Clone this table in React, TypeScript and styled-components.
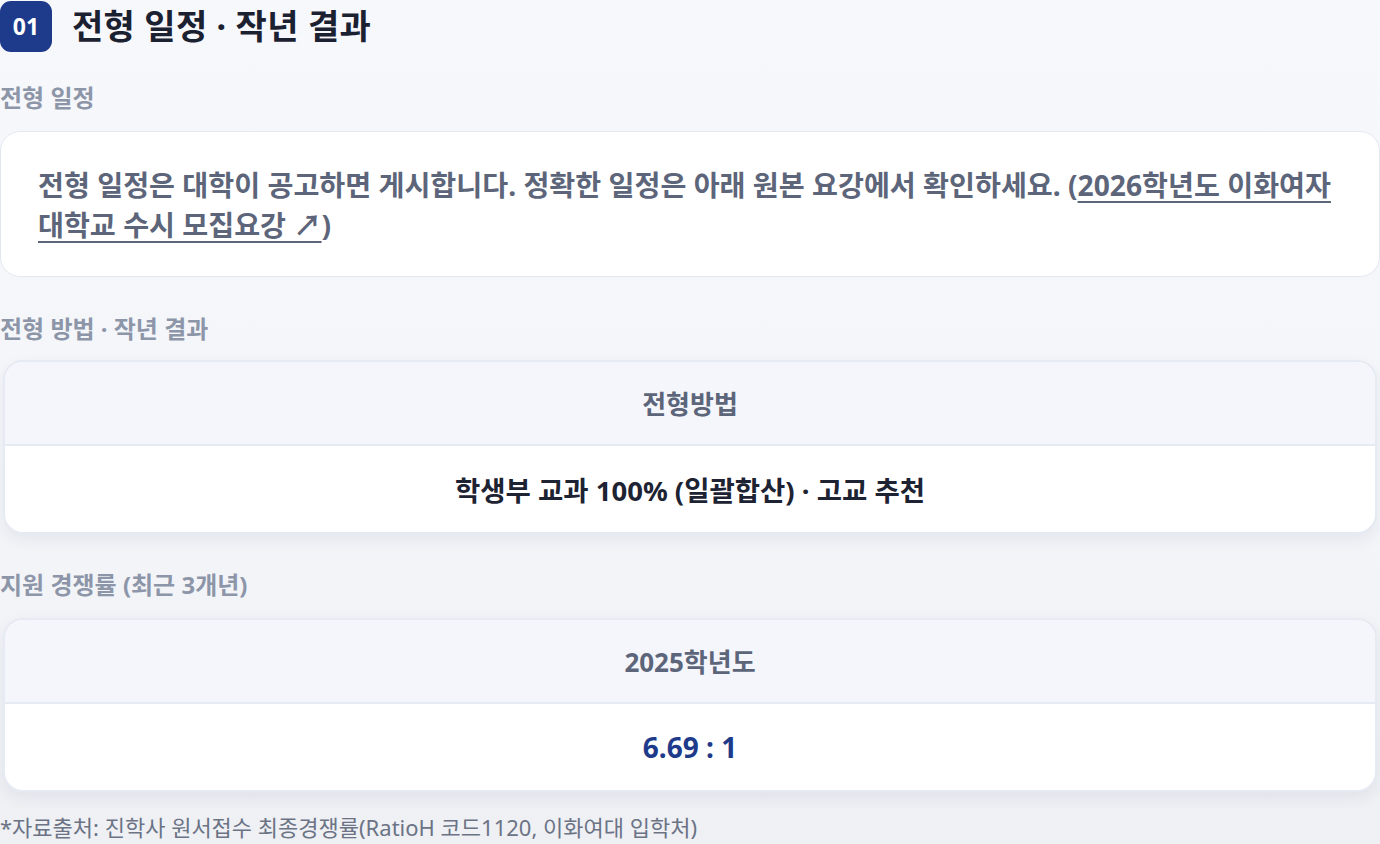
import React from "react";
import styled, { createGlobalStyle } from "styled-components";

const GlobalStyle = createGlobalStyle`
  html, body {
    margin: 0;
    padding: 0;
    background: linear-gradient(180deg, #f7f8fc 0%, #f3f5f9 60%, #eef0f4 100%);
    min-height: 100%;
  }
  body {
    font-family: "Noto Sans", "Noto Sans CJK KR", sans-serif;
    -webkit-font-smoothing: antialiased;
  }
  * { box-sizing: border-box; }
`;

const Page = styled.div`
  width: 1380px;
  height: 844px;
  display: flex;
  flex-direction: column;
  overflow: hidden;
`;

const HeaderRow = styled.div`
  display: flex;
  align-items: center;
  gap: 20px;
  height: 52px;
`;

const Badge = styled.div`
  width: 52px;
  height: 51px;
  border-radius: 11px;
  background: #1e3a8a;
  color: #ffffff;
  font-size: 23px;
  font-weight: 700;
  display: flex;
  align-items: center;
  justify-content: center;
`;

const Title = styled.h1`
  margin: 0;
  font-size: 34px;
  font-weight: 700;
  color: #1b2130;
  line-height: 1;
  letter-spacing: 0.3px;
`;

const SectionLabel = styled.div<{ $top: number; $bottom: number }>`
  margin-top: ${(p) => p.$top}px;
  margin-bottom: ${(p) => p.$bottom}px;
  font-size: 24px;
  line-height: 30px;
  font-weight: 700;
  color: #8d96a8;
`;

const NoticeCard = styled.div`
  background: #ffffff;
  border: 1.5px solid #e3e8f0;
  border-radius: 20px;
  padding: 33px 36px 31px 37px;
  font-size: 28.2px;
  line-height: 40px;
  font-weight: 700;
  color: #5c6579;
`;

const SourceLink = styled.a`
  color: #5c6579;
  text-decoration: underline;
  text-underline-offset: 5px;
  text-decoration-thickness: 2px;
`;

const TableCard = styled.div`
  margin: 0 3px;
  background: #ffffff;
  border: 2px solid #e6eaf2;
  border-radius: 20px;
  overflow: hidden;
  box-shadow: 0 6px 16px rgba(30, 41, 80, 0.07);
  display: flex;
  flex-direction: column;
`;

const TableHead = styled.div`
  height: 84px;
  background: #f4f6fb;
  border-bottom: 2px solid #e6eaf2;
  display: flex;
  align-items: center;
  justify-content: center;
  font-size: 26px;
  font-weight: 700;
  color: #5c6579;
`;

const TableBody = styled.div<{ $accent?: boolean }>`
  height: 86px;
  display: flex;
  align-items: center;
  justify-content: center;
  font-size: ${(p) => (p.$accent ? 28 : 27.5)}px;
  font-weight: 700;
  color: ${(p) => (p.$accent ? "#1e3a8a" : "#1d2332")};
`;

const Footnote = styled.div`
  margin-top: 20px;
  font-size: 22px;
  line-height: 30px;
  font-weight: 400;
  color: #6b7385;
`;

export default function App() {
  return (
    <>
      <GlobalStyle />
      <Page>
        <HeaderRow>
          <Badge>01</Badge>
          <Title>전형 일정 · 작년 결과</Title>
        </HeaderRow>

        <SectionLabel $top={31} $bottom={18}>전형 일정</SectionLabel>
        <NoticeCard>
          전형 일정은 대학이 공고하면 게시합니다. 정확한 일정은 아래 원본 요강에서 확인하세요. (<SourceLink href="#">2026학년도 이화여자대학교 수시 모집요강 ↗</SourceLink>)
        </NoticeCard>

        <SectionLabel $top={37} $bottom={16}>전형 방법 · 작년 결과</SectionLabel>
        <TableCard>
          <TableHead>전형방법</TableHead>
          <TableBody>학생부 교과 100% (일괄합산) · 고교 추천</TableBody>
        </TableCard>

        <SectionLabel $top={36} $bottom={18}>지원 경쟁률 (최근 3개년)</SectionLabel>
        <TableCard>
          <TableHead>2025학년도</TableHead>
          <TableBody $accent>6.69 : 1</TableBody>
        </TableCard>

        <Footnote>*자료출처: 진학사 원서접수 최종경쟁률(RatioH 코드1120, 이화여대 입학처)</Footnote>
      </Page>
    </>
  );
}
